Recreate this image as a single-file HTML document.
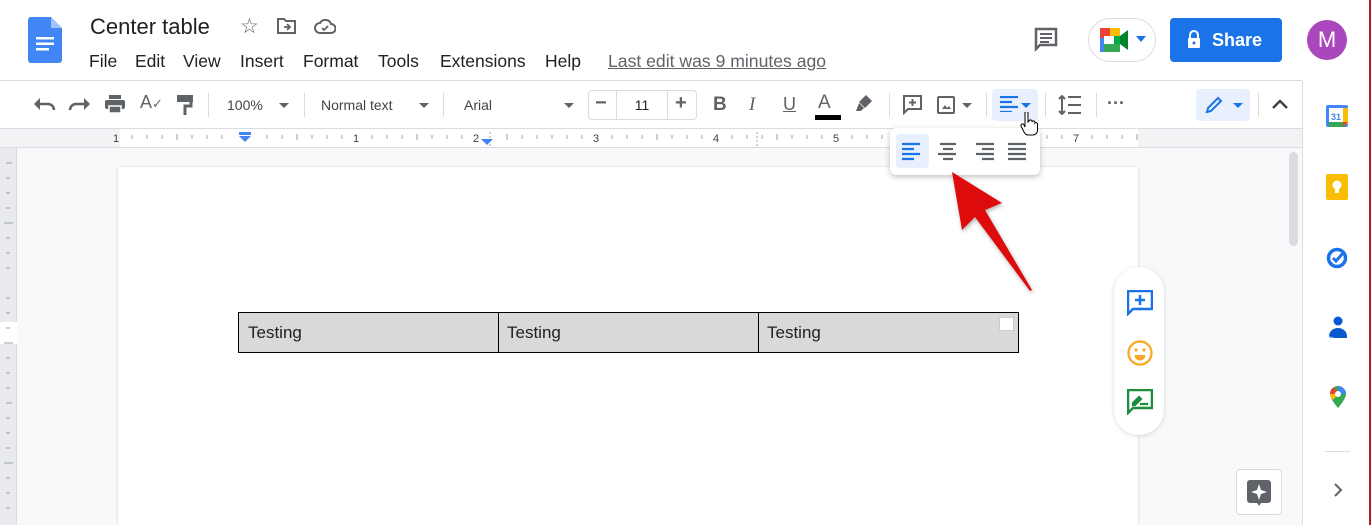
<!DOCTYPE html>
<html><head><meta charset="utf-8"><style>
*{margin:0;padding:0;box-sizing:border-box}
body{width:1372px;height:525px;overflow:hidden;background:#fff;font-family:"Liberation Sans",Arial,sans-serif;position:relative;color:#3c4043}
.a{position:absolute}
.m{position:absolute;top:51px;font-size:17.5px;color:#202124;white-space:nowrap}
.tb{font-size:14px;color:#444}
.sep{position:absolute;top:93px;width:1px;height:24px;background:#dadce0}
</style></head><body>
<!-- header -->
<svg class="a" style="left:28px;top:17px" width="34" height="46" viewBox="0 0 34 46"><path d="M3 0h20l11 11v32a3 3 0 0 1-3 3H3a3 3 0 0 1-3-3V3a3 3 0 0 1 3-3z" fill="#4285f4"/><path d="M23 0v11h11z" fill="#a1c2fa"/><rect x="8" y="20" width="18" height="2.5" fill="#fff"/><rect x="8" y="25.5" width="18" height="2.5" fill="#fff"/><rect x="8" y="31" width="13" height="2.5" fill="#fff"/></svg>
<div class="a" style="left:90px;top:14px;font-size:22px;color:#202124">Center table</div>
<div class="a" style="left:240px;top:14px;font-size:21px;color:#5f6368">☆</div>
<svg class="a" style="left:277px;top:17px" width="20" height="18" viewBox="0 0 20 18"><path d="M1 2h6l2 2h9v12H1z" fill="none" stroke="#5f6368" stroke-width="2"/><path d="M7 10h6M10 7l3 3-3 3" stroke="#5f6368" stroke-width="1.8" fill="none"/></svg>
<svg class="a" style="left:314px;top:18px" width="22" height="16" viewBox="0 0 22 16"><path d="M6 15a5 5 0 0 1 0-10 6 6 0 0 1 11 1 4.5 4.5 0 0 1 0 9z" fill="none" stroke="#5f6368" stroke-width="2"/><path d="M8 10l2 2 4-4" stroke="#5f6368" stroke-width="1.8" fill="none"/></svg>
<div class="m" style="left:89px">File</div><div class="m" style="left:135px">Edit</div><div class="m" style="left:183px">View</div><div class="m" style="left:240px">Insert</div><div class="m" style="left:303px">Format</div><div class="m" style="left:378px">Tools</div><div class="m" style="left:440px">Extensions</div><div class="m" style="left:545px">Help</div>
<div class="a" style="left:608px;top:51px;font-size:17.6px;color:#5f6368;text-decoration:underline">Last edit was 9 minutes ago</div>
<svg class="a" style="left:1034px;top:27px" width="26" height="26" viewBox="0 0 26 26"><path d="M2 2h20v16H6l-4 4z" fill="none" stroke="#5f6368" stroke-width="2.5"/><path d="M6 7h12M6 11h12M6 15h9" stroke="#5f6368" stroke-width="2"/></svg>
<div class="a" style="left:1088px;top:18px;width:68px;height:44px;border:1px solid #dadce0;border-radius:22px"></div>
<svg class="a" style="left:1100px;top:28px" width="32" height="24" viewBox="0 0 32 24"><rect x="0" y="0" width="10" height="10" fill="#ea4335"/><rect x="10" y="0" width="10" height="8" fill="#fbbc04"/><rect x="0" y="10" width="4" height="14" fill="#4285f4"/><rect x="4" y="16" width="16" height="8" fill="#34a853"/><rect x="4" y="8" width="10" height="8" fill="#fff"/><path d="M20 8l8-6v20l-8-6z" fill="#00832d"/><rect x="14" y="8" width="6" height="8" fill="#00ac47"/></svg>
<div class="a" style="left:1136px;top:36px;border:5px solid transparent;border-top:6px solid #1a73e8"></div>
<div class="a" style="left:1170px;top:18px;width:112px;height:44px;background:#1a73e8;border-radius:4px;color:#fff;font-size:18px;font-weight:bold;line-height:44px;padding-left:42px">Share</div>
<svg class="a" style="left:1187px;top:30px" width="14" height="18" viewBox="0 0 14 18"><path d="M3 8V5a4 4 0 0 1 8 0v3" fill="none" stroke="#fff" stroke-width="2"/><rect x="1" y="8" width="12" height="10" rx="1" fill="#fff"/><circle cx="7" cy="13" r="1.5" fill="#1a73e8"/></svg>
<div class="a" style="left:1307px;top:20px;width:40px;height:40px;border-radius:50%;background:#ab47bc;color:#fff;font-size:22px;text-align:center;line-height:40px">M</div>
<div class="a" style="left:0;top:80px;width:1302px;height:1px;background:#dadce0"></div>
<!-- toolbar -->
<svg class="a" style="left:34px;top:96px" width="56" height="16" viewBox="0 0 56 16"><path d="M4 8h10a6 6 0 0 1 6 6" stroke="#5f6368" stroke-width="2.5" fill="none"/><path d="M0 8l6-6v12z" fill="#5f6368"/><path d="M52 8H42a6 6 0 0 0-6 6" stroke="#5f6368" stroke-width="2.5" fill="none"/><path d="M56 8l-6-6v12z" fill="#5f6368"/></svg>
<svg class="a" style="left:105px;top:95px" width="20" height="18" viewBox="0 0 20 18"><rect x="4" y="0" width="12" height="4" fill="#5f6368"/><rect x="0" y="5" width="20" height="9" rx="2" fill="#5f6368"/><rect x="4" y="11" width="12" height="7" fill="#5f6368" stroke="#fff" stroke-width="1.5"/></svg>
<div class="a" style="left:140px;top:92px;font-size:18px;color:#5f6368">A<span style="font-size:13px">✓</span></div>
<svg class="a" style="left:177px;top:95px" width="16" height="20" viewBox="0 0 16 20"><rect x="0" y="0" width="16" height="7" fill="#5f6368"/><path d="M14 7v4H8v9" stroke="#5f6368" stroke-width="3" fill="none"/></svg>
<div class="sep" style="left:208px"></div>
<div class="a tb" style="left:227px;top:97px">100%</div><div class="a" style="left:279px;top:103px;border:5px solid transparent;border-top:5px solid #5f6368"></div>
<div class="sep" style="left:304px"></div>
<div class="a tb" style="left:321px;top:97px">Normal text</div><div class="a" style="left:419px;top:103px;border:5px solid transparent;border-top:5px solid #5f6368"></div>
<div class="sep" style="left:443px"></div>
<div class="a tb" style="left:464px;top:97px">Arial</div><div class="a" style="left:564px;top:103px;border:5px solid transparent;border-top:5px solid #5f6368"></div>
<div class="a" style="left:588px;top:90px;width:109px;height:30px;border:1px solid #dadce0;border-radius:4px"></div>
<div class="a" style="left:616px;top:90px;width:52px;height:30px;border-left:1px solid #dadce0;border-right:1px solid #dadce0;text-align:center;line-height:30px;font-size:14px;color:#202124">11</div>
<div class="a" style="left:595px;top:92px;font-size:20px;font-weight:bold;color:#5f6368">−</div>
<div class="a" style="left:675px;top:92px;font-size:20px;font-weight:bold;color:#5f6368">+</div>
<div class="a" style="left:713px;top:94px;font-size:19px;font-weight:bold;color:#5f6368">B</div>
<div class="a" style="left:749px;top:94px;font-size:19px;font-style:italic;font-family:'Liberation Serif',serif;color:#5f6368">I</div>
<div class="a" style="left:783px;top:94px;font-size:18px;text-decoration:underline;color:#5f6368">U</div>
<div class="a" style="left:818px;top:92px;font-size:19px;color:#5f6368">A</div>
<div class="a" style="left:815px;top:115px;width:26px;height:5px;background:#000"></div>
<svg class="a" style="left:856px;top:94px" width="18" height="18" viewBox="0 0 18 18"><path d="M10 1l6 6-7 7-6-6z" fill="#5f6368"/><path d="M3 9l5 5-3 3H0z" fill="#5f6368"/></svg>
<div class="sep" style="left:889px"></div>
<svg class="a" style="left:903px;top:95px" width="20" height="20" viewBox="0 0 20 20"><path d="M1 1h17v13H5l-4 4z" fill="none" stroke="#5f6368" stroke-width="2"/><path d="M9.5 4v7M6 7.5h7" stroke="#5f6368" stroke-width="2"/></svg>
<svg class="a" style="left:937px;top:96px" width="18" height="18" viewBox="0 0 18 18"><rect x="1" y="1" width="16" height="16" rx="1" fill="none" stroke="#5f6368" stroke-width="2"/><path d="M5 13l3-4 2 3 2-2 2 3z" fill="#5f6368"/></svg>
<div class="a" style="left:962px;top:103px;border:5px solid transparent;border-top:5px solid #5f6368"></div>
<div class="sep" style="left:986px"></div>
<div class="a" style="left:992px;top:89px;width:46px;height:32px;background:#e8f0fe;border-radius:4px"></div>
<svg class="a" style="left:1000px;top:96px" width="18" height="16" viewBox="0 0 18 16"><path d="M0 1h18M0 6h12M0 11h18M0 16h12" stroke="#1a73e8" stroke-width="2.2"/></svg>
<div class="a" style="left:1021px;top:103px;border:5px solid transparent;border-top:5px solid #1a73e8"></div>
<div class="sep" style="left:1045px"></div>
<svg class="a" style="left:1058px;top:95px" width="24" height="20" viewBox="0 0 24 20"><path d="M4 1v18M1 4l3-3 3 3M1 16l3 3 3-3M10 2h13M10 10h13M10 18h13" stroke="#5f6368" stroke-width="2" fill="none"/></svg>
<div class="sep" style="left:1096px"></div>
<div class="a" style="left:1107px;top:93px;font-size:18px;color:#5f6368;font-weight:bold">···</div>
<div class="a" style="left:1196px;top:89px;width:54px;height:32px;background:#e8f0fe;border-radius:4px"></div>
<svg class="a" style="left:1205px;top:96px" width="18" height="18" viewBox="0 0 18 18"><path d="M2 16l1-4 10-10 3 3-10 10z" fill="none" stroke="#1a73e8" stroke-width="2"/></svg>
<div class="a" style="left:1233px;top:103px;border:5px solid transparent;border-top:5px solid #1a73e8"></div>
<div class="sep" style="left:1258px"></div>
<svg class="a" style="left:1272px;top:99px" width="16" height="10" viewBox="0 0 16 10"><path d="M1 9l7-7 7 7" stroke="#444" stroke-width="2.5" fill="none"/></svg>
<!-- ruler -->
<div class="a" style="left:0;top:128px;width:1302px;height:20px;background:#f1f3f4;border-top:1px solid #dadce0;border-bottom:1px solid #dadce0"></div>
<div class="a" style="left:120px;top:129px;width:1018px;height:18px;background:#fff"></div>
<svg class="a" style="left:0;top:129px" width="1302" height="18">
<g stroke="#9aa0a6" stroke-width="1">
<path d="M132 6v4M147 6v4M162 6v4M177 5v6M192 6v4M207 6v4M222 6v4M267 6v4M282 6v4M297 5v6M312 6v4M327 6v4M342 6v4M372 6v4M387 6v4M402 6v4M417 5v6M432 6v4M447 6v4M462 6v4M507 5v6M522 6v4M537 6v4M552 6v4M567 6v4M582 6v4M612 6v4M627 6v4M642 6v4M657 5v6M672 6v4M687 6v4M702 6v4M732 6v4M747 6v4M762 6v4M777 5v6M792 6v4M807 6v4M822 6v4M852 6v4M867 6v4M882 6v4M897 5v6M1047 6v4M1062 6v4M1092 6v4M1107 6v4M1122 6v4M1137 5v6"/></g>
<g font-size="11" fill="#3c4043" font-family="Liberation Sans"><text x="113" y="13">1</text><text x="353" y="13">1</text><text x="473" y="13">2</text><text x="593" y="13">3</text><text x="713" y="13">4</text><text x="833" y="13">5</text><text x="1073" y="13">7</text></g>
<path d="M490 3v14M757 3v14" stroke="#9aa0a6" stroke-dasharray="2 2"/>
<rect x="239" y="3" width="12" height="3" fill="#4285f4"/><path d="M239 7h12l-6 6z" fill="#4285f4"/><path d="M481 10h12l-6 6z" fill="#4285f4"/>
</svg>
<!-- canvas -->
<div class="a" style="left:0;top:148px;width:1302px;height:377px;background:#f8f9fa"></div>
<div class="a" style="left:0;top:148px;width:17px;height:377px;background:#e8eaed;border-right:1px solid #dadce0"></div>
<div class="a" style="left:0;top:322px;width:17px;height:22px;background:#fff"></div>
<svg class="a" style="left:0;top:148px" width="17" height="377"><g stroke="#9aa0a6"><path d="M6 15h6M6 30h4M6 45h4M6 60h4M4 75h9M6 90h4M6 105h4M6 120h4M6 150h4M6 165h4M6 180h4M4 195h9M6 210h4M6 225h4M6 240h4M6 255h6M6 270h4M6 285h4M6 300h4M4 315h9M6 330h4M6 345h4M6 360h4"/></g></svg>
<div class="a" style="left:118px;top:167px;width:1020px;height:358px;background:#fff;box-shadow:0 0 2px rgba(0,0,0,.2)"></div>
<div class="a" style="left:1289px;top:152px;width:9px;height:94px;background:#dadce0;border-radius:5px"></div>
<!-- table -->
<table class="a" style="left:238px;top:312px;width:781px;height:41px;border-collapse:collapse;background:#d9d9d9;font-size:17px;color:#202124">
<tr><td style="border:1px solid #000;padding-left:9px;width:260px">Testing</td><td style="border:1px solid #000;padding-left:8px;width:260px">Testing</td><td style="border:1px solid #000;padding-left:8px;position:relative">Testing<div style="position:absolute;right:4px;top:4px;width:15px;height:14px;background:#fff;border:1px solid #ccc"></div></td></tr></table>
<!-- popup -->
<div class="a" style="left:890px;top:128px;width:150px;height:47px;background:#fff;border-radius:6px;box-shadow:0 2px 6px rgba(0,0,0,.25)"></div>
<div class="a" style="left:896px;top:134px;width:33px;height:34px;background:#e8f0fe;border-radius:4px"></div>
<svg class="a" style="left:902px;top:142px" width="130" height="20" viewBox="0 0 130 20"><g stroke-width="2.2"><path d="M0 2h18M0 7h12M0 12h18M0 17h12" stroke="#1a73e8"/><path d="M38 2h16M41 7h10M36 12h18M41 17h10" stroke="#5f6368"/><path d="M74 2h18M80 7h12M74 12h18M80 17h12" stroke="#5f6368"/><path d="M106 2h18M106 7h18M106 12h18M106 17h18" stroke="#5f6368"/></g></svg>
<!-- cursor -->
<svg class="a" style="left:1020px;top:112px" width="18" height="24" viewBox="0 0 18 24"><path d="M5 1a1.5 1.5 0 0 1 3 0v9l1-1a1.5 1.5 0 0 1 3 1 1.5 1.5 0 0 1 3 1 1.5 1.5 0 0 1 2.5 1v6c0 3-2 5-5 5H8c-2 0-3-1-4-3L1 14a1.5 1.5 0 0 1 3-1l1 2z" fill="#fff" stroke="#000" stroke-width="1"/></svg>
<!-- arrow -->
<svg class="a" style="left:940px;top:165px" width="100" height="130"><path d="M12 7L62 38L45 45L92 125L90 126L35 52L22 65Z" fill="#dd0b0b" style="filter:drop-shadow(1px 2px 2px rgba(0,0,0,.3))"/></svg>
<!-- floating side -->
<div class="a" style="left:1114px;top:267px;width:50px;height:168px;background:#fff;border-radius:25px;box-shadow:0 1px 4px rgba(0,0,0,.15)"></div>
<svg class="a" style="left:1127px;top:290px" width="26" height="26" viewBox="0 0 26 26"><path d="M1 1h24v18H6l-5 5z" fill="none" stroke="#1a73e8" stroke-width="2.5"/><path d="M13 5v10M8 10h10" stroke="#1a73e8" stroke-width="2.5"/></svg>
<svg class="a" style="left:1127px;top:340px" width="26" height="26" viewBox="0 0 26 26"><circle cx="13" cy="13" r="11.5" fill="none" stroke="#f9a825" stroke-width="2.3"/><circle cx="9" cy="10" r="1.6" fill="#f9a825"/><circle cx="17" cy="10" r="1.6" fill="#f9a825"/><path d="M7.5 15h11a5.5 5.5 0 0 1-11 0z" fill="#f9a825"/></svg>
<svg class="a" style="left:1127px;top:389px" width="26" height="26" viewBox="0 0 26 26"><path d="M1 1h24v18H6l-5 5z" fill="none" stroke="#1e8e3e" stroke-width="2.5"/><path d="M6 14l6-6 2 2-6 6H6zM13 15h8" stroke="#1e8e3e" stroke-width="2.2" fill="#1e8e3e"/></svg>
<div class="a" style="left:1236px;top:469px;width:46px;height:46px;background:#fff;border:1px solid #dadce0;border-radius:4px"></div>
<svg class="a" style="left:1247px;top:480px" width="24" height="26" viewBox="0 0 24 26"><path d="M3 0h18a3 3 0 0 1 3 3v17a3 3 0 0 1-3 3h-7l-2 3-2-3H3a3 3 0 0 1-3-3V3a3 3 0 0 1 3-3z" fill="#5f6368"/><path d="M12 4l2 6 6 2-6 2-2 6-2-6-6-2 6-2z" fill="#fff"/></svg>
<!-- right panel -->
<div class="a" style="left:1302px;top:81px;width:1px;height:444px;background:#dadce0"></div>
<div class="a" style="left:1369px;top:0;width:2px;height:525px;background:#b71c1c"></div>
<svg class="a" style="left:1326px;top:105px" width="22" height="22" viewBox="0 0 22 22"><rect width="22" height="22" rx="2" fill="#4285f4"/><rect x="3" y="3" width="16" height="16" fill="#fff"/><rect x="17" y="3" width="5" height="16" fill="#fbbc04"/><rect x="3" y="17" width="16" height="5" fill="#34a853"/><path d="M17 17h5l-5 5z" fill="#ea4335"/><text x="5" y="15" font-size="9" fill="#4285f4" font-family="Liberation Sans" font-weight="bold">31</text></svg>
<svg class="a" style="left:1326px;top:174px" width="22" height="26" viewBox="0 0 22 26"><rect width="22" height="26" rx="2" fill="#fbbc04"/><circle cx="11" cy="11" r="4.5" fill="#fff"/><rect x="9" y="15" width="4" height="4" fill="#fff"/></svg>
<svg class="a" style="left:1326px;top:245px" width="24" height="24" viewBox="0 0 24 24"><circle cx="11" cy="13" r="8.5" fill="none" stroke="#1a73e8" stroke-width="3.5"/><path d="M7 13l3 3 8-9" stroke="#1a73e8" stroke-width="3" fill="none"/></svg>
<svg class="a" style="left:1329px;top:316px" width="18" height="22" viewBox="0 0 18 22"><circle cx="9" cy="5" r="4.5" fill="#0b57d0"/><path d="M0 20a9 8 0 0 1 18 0v2H0z" fill="#0b57d0"/><path d="M0 20v2h6z" fill="#8ab4f8"/></svg>
<svg class="a" style="left:1330px;top:386px" width="16" height="22" viewBox="0 0 16 22"><path d="M8 0a8 8 0 0 1 8 8c0 5-8 14-8 14S0 13 0 8a8 8 0 0 1 8-8z" fill="#34a853"/><path d="M8 0a8 8 0 0 1 8 8l-8 0z" fill="#4285f4"/><path d="M0 8a8 8 0 0 1 4-7l4 7z" fill="#ea4335"/><path d="M0 8h8l-5 6C1 12 0 10 0 8z" fill="#fbbc04"/><circle cx="8" cy="8" r="3" fill="#fff"/></svg>
<div class="a" style="left:1325px;top:451px;width:25px;height:1px;background:#dadce0"></div>
<svg class="a" style="left:1333px;top:483px" width="10" height="14" viewBox="0 0 10 14"><path d="M2 1l6 6-6 6" stroke="#5f6368" stroke-width="2" fill="none"/></svg>
</body></html>
